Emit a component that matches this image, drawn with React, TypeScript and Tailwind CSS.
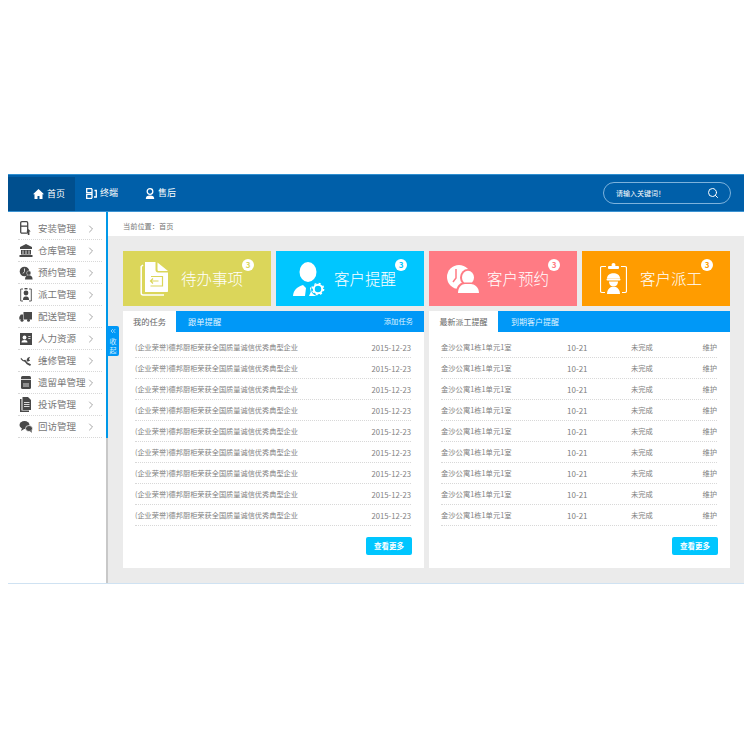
import React from 'react';
import { ChevronRight, Search, ChevronsLeft } from 'lucide-react';

const font = { fontFamily: '"Noto Sans CJK SC", "Noto Sans", sans-serif' };

const MenuIcon = ({ name }: { name: string }) => {
  const c = '#484848';
  switch (name) {
    case 'install':
      return (
        <svg width="11" height="15" viewBox="0 0 11 15">
          <rect x="0.700" y="0.700" width="7" height="11.500" rx="1.200" fill="none" stroke={c} strokeWidth="1.300" />
          <rect x="1" y="4.500" width="7" height="1.300" fill={c} />
          <path d="M8.500 8l2.200 2.500H9.400V14H7.800v-3.500H6.400z" fill={c} />
        </svg>
      );
    case 'store':
      return (
        <svg width="14" height="13" viewBox="0 0 14 13">
          <path d="M7 0 13 3v2H1V3z M.5 11h13v2H.5z M2 6h10v4.500H2z" fill={c} />
          <path d="M4 6.500v3.500M7 6.500v3.500M10 6.500v3.500" stroke="#fff" strokeWidth="0.800" />
        </svg>
      );
    case 'booking':
      return (
        <svg width="14" height="14" viewBox="0 0 14 14">
          <circle cx="5.500" cy="5.500" r="4.800" fill={c} />
          <path d="M5.500 2.500v3l-1.500 2" stroke="#fff" strokeWidth="0.800" fill="none" />
          <circle cx="9.800" cy="7" r="2.200" fill={c} stroke="#fff" strokeWidth="0.500" />
          <path d="M6 13.500c0-3 1.600-4.200 3.800-4.200s3.800 1.200 3.800 4.200z" fill={c} />
        </svg>
      );
    case 'dispatch':
      return (
        <svg width="12" height="15" viewBox="0 0 12 15">
          <path d="M3 2H.700v12H3M9 2h2.300v12H9" fill="none" stroke={c} strokeWidth="0.900" />
          <circle cx="6" cy="6" r="2.400" fill={c} />
          <path d="M3 13c0-3 1.200-3.500 3-3.500s3 .5 3 3.500z" fill={c} />
          <rect x="4.500" y="1" width="3" height="1.400" fill={c} />
        </svg>
      );
    case 'truck':
      return (
        <svg width="13" height="10" viewBox="0 0 13 10">
          <path d="M4.500 0H13v7.500H4.500zM4 2.500H1.800L.3 5v2.500H4z" fill={c} />
          <circle cx="3" cy="8.300" r="1.500" fill={c} />
          <circle cx="9.500" cy="8.300" r="1.500" fill={c} />
        </svg>
      );
    case 'hr':
      return (
        <svg width="12" height="12" viewBox="0 0 12 12">
          <rect width="12" height="12" fill={c} />
          <circle cx="4.500" cy="4.500" r="1.900" fill="#fff" />
          <path d="M1.500 9.500c0-2 1.300-2.600 3-2.600s3 .6 3 2.600z" fill="#fff" />
          <path d="M8.300 3.500h2.200M8.300 5.500h2.200" stroke="#fff" strokeWidth="0.800" />
        </svg>
      );
    case 'repair':
      return (
        <svg width="12" height="10" viewBox="0 0 14 12">
          <path d="M1 2l3 3 2-.5L9 8l4 2-1 2-4-2-2.500-3L3 6 .5 3.500zM9 2l3-1-1.500 3L12 5.500 9 7 7.500 5z" fill={c} />
        </svg>
      );
    case 'order':
      return (
        <svg width="10" height="13" viewBox="0 0 10 13">
          <rect x="0" y="0" width="10" height="13" rx="1.500" fill={c} />
          <path d="M0 3.500h10M2 8h6M2 10h6" stroke="#fff" strokeWidth="0.800" />
        </svg>
      );
    case 'complaint':
      return (
        <svg width="11" height="15" viewBox="0 0 11 15">
          <path d="M0 2h1.500v11.500H9V15H0z" fill={c} />
          <path d="M2.500 0H8l3 3v10H2.500z" fill={c} />
          <path d="M4 5.500h5.500M4 7.500h5.500M4 9.500h5.500" stroke="#fff" strokeWidth="0.800" />
        </svg>
      );
    default:
      return (
        <svg width="14" height="12" viewBox="0 0 14 12">
          <ellipse cx="5.500" cy="4" rx="5" ry="4" fill={c} />
          <path d="M3 7 2 10l4-2.500z" fill={c} />
          <ellipse cx="10" cy="7.500" rx="3.500" ry="3" fill={c} stroke="#fff" strokeWidth="0.700" />
          <path d="M11 10 12.800 12l-.3-3z" fill={c} />
        </svg>
      );
  }
};

const menu = [
  ['install', '安装管理'],
  ['store', '仓库管理'],
  ['booking', '预约管理'],
  ['dispatch', '派工管理'],
  ['truck', '配送管理'],
  ['hr', '人力资源'],
  ['repair', '维修管理'],
  ['order', '遗留单管理'],
  ['complaint', '投诉管理'],
  ['reply', '回访管理'],
];

const TodoIcon = () => (
  <svg width="28" height="34" viewBox="0 0 28 34" fill="none">
    <path d="M3 3 1.200 4.500V31c0 1.200.8 2 2 2H24" stroke="#fff" strokeWidth="1.500" />
    <path d="M5 0h10.500v8c0 1.500 1 2.500 2.500 2.500H28V29c0 .6-.4 1-1 1H5z" fill="#fff" />
    <path d="M17.500 .5 28 9h-9c-1 0-1.500-.5-1.500-1.500z" fill="#fff" />
    <path d="M11 14.500h11.500V24H10.500M10.500 19h8M13 16.500 10.500 19l2.500 2.500" stroke="#dbd65a" strokeWidth="1.200" />
  </svg>
);

const RemindIcon = () => (
  <svg width="32" height="34" viewBox="0 0 32 34" fill="#fff">
    <ellipse cx="15" cy="10" rx="8.500" ry="10" />
    <path d="M0 34c.5-6 4-9 10-11l3 3-1 8zM20 23l-3 3 .8 4-1.800 4h8z" />
    <circle cx="25" cy="27" r="7" fill="#00c6ff" />
    <circle cx="25" cy="27" r="4.200" fill="none" stroke="#fff" strokeWidth="2" />
    <circle cx="25" cy="27" r="5.600" fill="none" stroke="#fff" strokeWidth="1.500" strokeDasharray="2 2.400" />
  </svg>
);

const BookIcon = () => (
  <svg width="32" height="28" viewBox="0 0 32 28" fill="#fff">
    <circle cx="12" cy="12" r="12" />
    <path d="M9 4v9l-3 4" stroke="#ff7b84" strokeWidth="1.500" fill="none" />
    <ellipse cx="21" cy="12.500" rx="8" ry="8.500" fill="#ff7b84" />
    <ellipse cx="21" cy="12.500" rx="6" ry="6.800" />
    <path d="M9 28c0-7 4-10 7-10.500h10c3 .5 6 3.500 6 10.500z" fill="#ff7b84" />
    <path d="M11 28c0-6 4-9 7-9h6c3 0 8 3 8 9z" />
  </svg>
);

const DispatchIcon = () => (
  <svg width="27" height="32" viewBox="0 0 27 32" fill="none">
    <path d="M6 3.500H2c-1 0-1.500.5-1.500 1.500v23c0 1 .5 1.500 1.500 1.500h3M21 3.500h4c1 0 1.500.5 1.500 1.500v23c0 1-.5 1.500-1.500 1.500h-3" stroke="#fff" strokeWidth="1.200" />
    <rect x="8" y="3" width="11" height="3" rx="1" fill="#fff" />
    <circle cx="13.500" cy="2" r="2" fill="#fff" />
    <path d="M7 15.500c0-7 13-7 13 0z" fill="#fff" />
    <rect x="6.500" y="15.500" width="14" height="2" rx="1" fill="#fff" />
    <path d="M9 18.500h9c0 3-2 5-4.500 5S9 21.500 9 18.500z" fill="#fff" />
    <path d="M7 31c0-4 2-6 4-7h5c2 1 4 3 4 7z" fill="#fff" />
  </svg>
);

const cards = [
  { title: '待办事项', bg: 'bg-[#dbd65a]', num: 'text-[#dbd65a]', icon: <TodoIcon />, pl: 'pl-[17px]', gap: 'ml-[9px]' },
  { title: '客户提醒', bg: 'bg-[#00c6ff]', num: 'text-[#00c6ff]', icon: <RemindIcon />, pl: 'pl-[17px]', gap: 'ml-[9px]' },
  { title: '客户预约', bg: 'bg-[#ff7b84]', num: 'text-[#ff7b84]', icon: <BookIcon />, pl: 'pl-[18px]', gap: 'ml-[8px]' },
  { title: '客户派工', bg: 'bg-[#ff9c00]', num: 'text-[#ff9c00]', icon: <DispatchIcon />, pl: 'pl-[18px]', gap: 'ml-[8px]' },
];

const rows = Array.from({ length: 9 }, (_, i) => i);

const App: React.FC = () => {
  return (
    <div className="w-[750px] h-[750px] bg-white pt-[174px] pl-2" style={font}>
      <div className="w-[736px] h-[410px] flex flex-col border-b border-[#cfe2f2]">
        {/* header */}
        <header className="h-[38px] shrink-0 flex items-stretch justify-between bg-[#005fa9] border-t border-[#2f8fd0] border-b border-b-[#3c93d2]">
          <nav className="flex items-stretch text-white text-[9px]">
            <a className="mt-[2px] w-[67px] pl-[25px] flex items-center gap-[3px] bg-[#004f8e]">
              <svg width="11" height="10" viewBox="0 0 11 10" fill="#fff">
                <path d="M5.500 0 0 5.200h1.500V10h3V7h2v3h3V5.200H11z" />
              </svg>
              首页
            </a>
            <a className="ml-[11px] w-[46px] flex items-center gap-[3px]">
              <svg width="11" height="11" viewBox="0 0 11 11" fill="none" stroke="#fff" strokeWidth="1.300">
                <path d="M6 .7H.7v4H6M6 6.300H.7v4H6M6 .7v9.600M8.500 2.500h1.800v6.500H8" />
              </svg>
              终端
            </a>
            <a className="ml-[13px] w-[46px] flex items-center gap-[3px]">
              <svg width="10" height="11" viewBox="0 0 10 11" fill="none">
                <circle cx="5" cy="3.500" r="2.800" stroke="#fff" strokeWidth="1.300" />
                <path d="M.8 11c0-2.500 1.200-3.500 4.200-3.500S9.200 8.500 9.200 11z" fill="#fff" />
              </svg>
              售后
            </a>
          </nav>
          <div className="mr-[13px] my-auto w-[128px] h-[22px] rounded-full border border-[#7db2dc] flex items-center justify-between pl-[12px] pr-[11px] text-white text-[7px]">
            <span>请输入关键词！</span>
            <Search size={12} strokeWidth={2} />
          </div>
        </header>

        <div className="flex-1 flex min-h-0">
          {/* sidebar */}
          <aside className="relative w-[100px] shrink-0 border-r-2 border-[#c8c8c8]">
            <div className="-mr-[2px] border-r-2 border-[#0098e8] pl-[10px] pr-[4px] pt-[6px]">
              {menu.map(([icon, label]) => (
                <div key={label} className="h-[22px] flex items-center border-b border-dotted border-[#d8d8d8] text-[#777] text-[9.500px]">
                  <span className="w-[15px] mr-[5px] flex justify-center shrink-0"><MenuIcon name={icon} /></span>
                  <span className="whitespace-nowrap flex-1 min-w-0">{label}</span>
                  <ChevronRight size={12} strokeWidth={1.500} className="text-[#888] mr-[5px] shrink-0" />
                </div>
              ))}
            </div>
            <div className="absolute left-[99px] top-[114px] w-[12px] h-[30px] rounded-r-[2px] bg-[#0098f7] text-[#d8f0ff] text-[7px] leading-[8.500px] flex flex-col items-center pt-[1px]">
              <ChevronsLeft size={8} className="mb-[2px]" />
              <span>收</span>
              <span>起</span>
            </div>
          </aside>

          {/* main */}
          <main className="flex-1 flex flex-col min-w-0">
            <div className="h-[24px] shrink-0 pl-[15px] pt-[5px] flex items-center text-[7.200px] text-[#777]">当前位置：首页</div>
            <div className="flex-1 bg-[#ebebeb] pl-[15px] pr-[14px] pt-[15px]">
              <div className="grid grid-cols-4 gap-[5px]">
                {cards.map(c => (
                  <div key={c.title} className={`relative h-[55px] flex items-center ${c.bg} ${c.pl} text-white`}>
                    <span className="w-[32px] shrink-0">{c.icon}</span>
                    <span className={`${c.gap} text-[15.500px] font-light`}>{c.title}</span>
                    <span className={`absolute left-[119px] top-[8px] w-[12px] h-[12px] rounded-full bg-white ${c.num} text-[8px] font-bold leading-[12px] text-center`}>3</span>
                  </div>
                ))}
              </div>

              <div className="grid grid-cols-2 gap-[5px] mt-[5px]">
                {/* left panel */}
                <section className="h-[257px] bg-white flex flex-col">
                  <div className="h-[21px] shrink-0 flex items-center text-[8.300px]">
                    <span className="w-[53px] text-center text-[#666]">我的任务</span>
                    <div className="flex-1 h-full bg-[#0098f7] text-[#dff2ff] flex items-center justify-between pl-[12px] pr-[11px]">
                      <span>跟单提醒</span>
                      <span className="text-[7.300px]">添加任务</span>
                    </div>
                  </div>
                  <div className="pl-[12px] pr-[13px] pt-[5px]">
                    {rows.map(i => (
                      <div key={i} className="h-[21px] pt-[1px] flex items-center justify-between border-b border-dotted border-[#d8d8d8] text-[7.200px] text-[#808080]">
                        <span>(企业荣誉)德邦厨柜荣获全国质量诚信优秀典型企业</span>
                        <span className="text-[7.700px]">2015-12-23</span>
                      </div>
                    ))}
                  </div>
                  <div className="flex justify-end pr-[12px] mt-[11px]">
                    <button className="w-[46px] h-[18px] rounded-[2px] bg-[#00c6ff] text-white text-[7.500px] font-bold">查看更多</button>
                  </div>
                </section>

                {/* right panel */}
                <section className="h-[257px] bg-white flex flex-col">
                  <div className="h-[21px] shrink-0 flex items-center text-[8px]">
                    <span className="w-[69px] text-center text-[#666]">最新派工提醒</span>
                    <div className="flex-1 h-full bg-[#0098f7] text-[#dff2ff] flex items-center pl-[13px]">
                      <span>到期客户提醒</span>
                    </div>
                  </div>
                  <div className="pl-[12px] pr-[13px] pt-[5px]">
                    {rows.map(i => (
                      <div key={i} className="h-[21px] pt-[1px] flex items-center border-b border-dotted border-[#d8d8d8] text-[7.300px] text-[#808080]">
                        <span className="w-[126px]">金沙公寓1栋1单元1室</span>
                        <span className="w-[64px] text-[8px]">10-21</span>
                        <span className="flex-1">未完成</span>
                        <span>维护</span>
                      </div>
                    ))}
                  </div>
                  <div className="flex justify-end pr-[12px] mt-[11px]">
                    <button className="w-[46px] h-[18px] rounded-[2px] bg-[#00c6ff] text-white text-[7.500px] font-bold">查看更多</button>
                  </div>
                </section>
              </div>
            </div>
          </main>
        </div>
      </div>
    </div>
  );
};

export default App;
